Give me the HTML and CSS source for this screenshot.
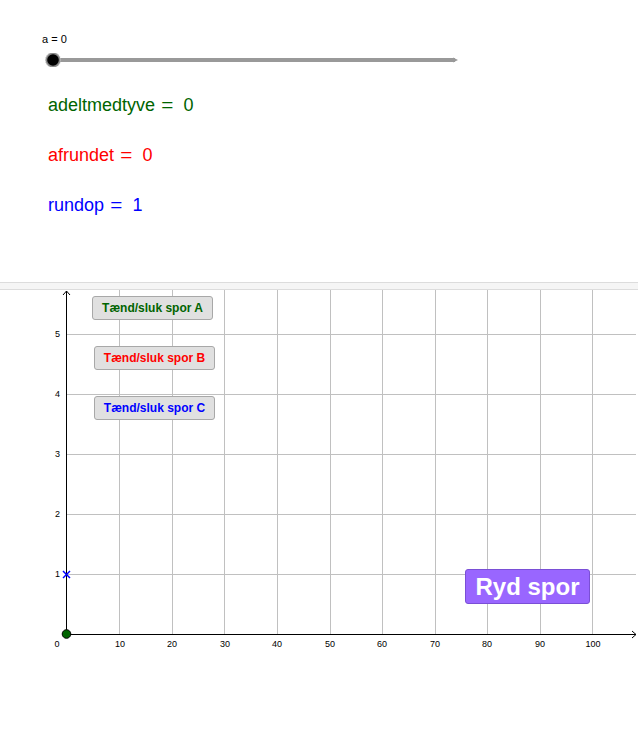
FILE: index.html
```html
<!DOCTYPE html>
<html>
<head>
<meta charset="utf-8">
<link rel="stylesheet" href="styles.css">
</head>
<body>
<div class="algebra">
  <div class="slider-label">a = 0</div>
  <svg class="slider" width="470" height="14" viewBox="0 0 470 14">
    <line x1="53" y1="7" x2="455" y2="7" stroke="#999" stroke-width="4"/>
    <path d="M453 4.5 L458 7 L453 9.5 Z" fill="#999"/>
    <circle cx="53" cy="7" r="7.5" fill="#888" stroke="#bbb" stroke-width="1" stroke-dasharray="1.5 1"/>
    <circle cx="53" cy="7" r="5.8" fill="#000"/>
  </svg>
  <div class="expr green">adeltmedtyve<span class="eq">=</span>0</div>
  <div class="expr red">afrundet<span class="eq">=</span>0</div>
  <div class="expr blue">rundop<span class="eq">=</span>1</div>
</div>
<div class="divider"></div>
<div class="graph">
  <svg class="canvas" width="638" height="446" viewBox="0 0 638 446">
    <g stroke="#c0c0c0" stroke-width="1">
      <line x1="119.5" y1="0" x2="119.5" y2="344"/>
      <line x1="172.5" y1="0" x2="172.5" y2="344"/>
      <line x1="224.5" y1="0" x2="224.5" y2="344"/>
      <line x1="277.5" y1="0" x2="277.5" y2="344"/>
      <line x1="330.5" y1="0" x2="330.5" y2="344"/>
      <line x1="382.5" y1="0" x2="382.5" y2="344"/>
      <line x1="435.5" y1="0" x2="435.5" y2="344"/>
      <line x1="487.5" y1="0" x2="487.5" y2="344"/>
      <line x1="540.5" y1="0" x2="540.5" y2="344"/>
      <line x1="592.5" y1="0" x2="592.5" y2="344"/>
      <line x1="66" y1="44.5" x2="636" y2="44.5"/>
      <line x1="66" y1="104.5" x2="636" y2="104.5"/>
      <line x1="66" y1="164.5" x2="636" y2="164.5"/>
      <line x1="66" y1="224.5" x2="636" y2="224.5"/>
      <line x1="66" y1="284.5" x2="636" y2="284.5"/>
    </g>
    <g stroke="#000" stroke-width="1" fill="none">
      <line x1="66.5" y1="1" x2="66.5" y2="344"/>
      <path d="M63 5 L66.5 1 L70 5"/>
      <line x1="66" y1="344.5" x2="636" y2="344.5"/>
      <path d="M632 341 L636 344.5 L632 348"/>
    </g>
    <g class="ticks" font-family="Liberation Sans, Arial, sans-serif" font-size="9" fill="#000" text-anchor="middle">
      <text x="57" y="357">0</text>
      <text x="120" y="357">10</text>
      <text x="172" y="357">20</text>
      <text x="225" y="357">30</text>
      <text x="277" y="357">40</text>
      <text x="330" y="357">50</text>
      <text x="382" y="357">60</text>
      <text x="435" y="357">70</text>
      <text x="487" y="357">80</text>
      <text x="540" y="357">90</text>
      <text x="593" y="357">100</text>
    </g>
    <g font-family="Liberation Sans, Arial, sans-serif" font-size="9" fill="#000" text-anchor="end">
      <text x="60" y="287">1</text>
      <text x="60" y="227">2</text>
      <text x="60" y="167">3</text>
      <text x="60" y="107">4</text>
      <text x="60" y="47">5</text>
    </g>
    <g stroke="#0000ff" stroke-width="1.5">
      <line x1="63" y1="281" x2="70" y2="288"/>
      <line x1="70" y1="281" x2="63" y2="288"/>
    </g>
    <circle cx="66.5" cy="344" r="4.3" fill="#006400" stroke="#000" stroke-width="1"/>
  </svg>
  <button class="toggle btn-a">Tænd/sluk spor A</button>
  <button class="toggle btn-b">Tænd/sluk spor B</button>
  <button class="toggle btn-c">Tænd/sluk spor C</button>
  <button class="clear">Ryd spor</button>
</div>
</body>
</html>
```
FILE: styles.css
```css
html, body {
  margin: 0;
  padding: 0;
  background: #fff;
}
body {
  width: 638px;
  height: 736px;
  overflow: hidden;
  font-family: "Liberation Sans", Arial, sans-serif;
}
.algebra {
  height: 282px;
  display: flex;
  flex-direction: column;
  padding-top: 33px;
  box-sizing: border-box;
}
.slider-label {
  font-size: 11px;
  line-height: 13px;
  margin-left: 42px;
  color: #000;
}
.slider {
  display: block;
  margin-top: 7px;
}
.slider + .expr {
  margin-top: 13px;
}
.expr {
  margin-left: 48px;
  font-size: 18px;
  line-height: 50px;
  font-family: "Liberation Sans", Arial, sans-serif;
}
.eq {
  display: inline-block;
  transform: scaleX(1.15);
  margin: 0 11px 0 7px;
}
.green { color: #006400; }
.red { color: #ff0000; }
.blue { color: #0000ff; }
.divider {
  height: 6px;
  background: #f5f5f5;
  border-top: 1px solid #dcdcdc;
  border-bottom: 1px solid #dcdcdc;
}
.graph {
  position: relative;
  height: 446px;
}
.canvas {
  display: block;
}
.toggle {
  position: absolute;
  height: 24px;
  width: 121px;
  padding: 0;
  background: #e0e0e0;
  border: 1px solid #a8a8a8;
  border-radius: 3px;
  font-family: "Liberation Sans", Arial, sans-serif;
  font-weight: bold;
  font-size: 12px;
  box-sizing: border-box;
}
.btn-a { left: 92px; top: 6px; color: #006400; }
.btn-b { left: 94px; top: 56px; color: #ff0000; }
.btn-c { left: 94px; top: 106px; color: #0000ff; }
.clear {
  position: absolute;
  left: 465px;
  top: 279px;
  width: 125px;
  height: 35px;
  padding: 0;
  box-sizing: border-box;
  background: #9966ff;
  border: 1px solid #7a4fd6;
  border-radius: 3px;
  color: #fff;
  font-family: "Liberation Sans", Arial, sans-serif;
  font-weight: bold;
  font-size: 24px;
}
```
